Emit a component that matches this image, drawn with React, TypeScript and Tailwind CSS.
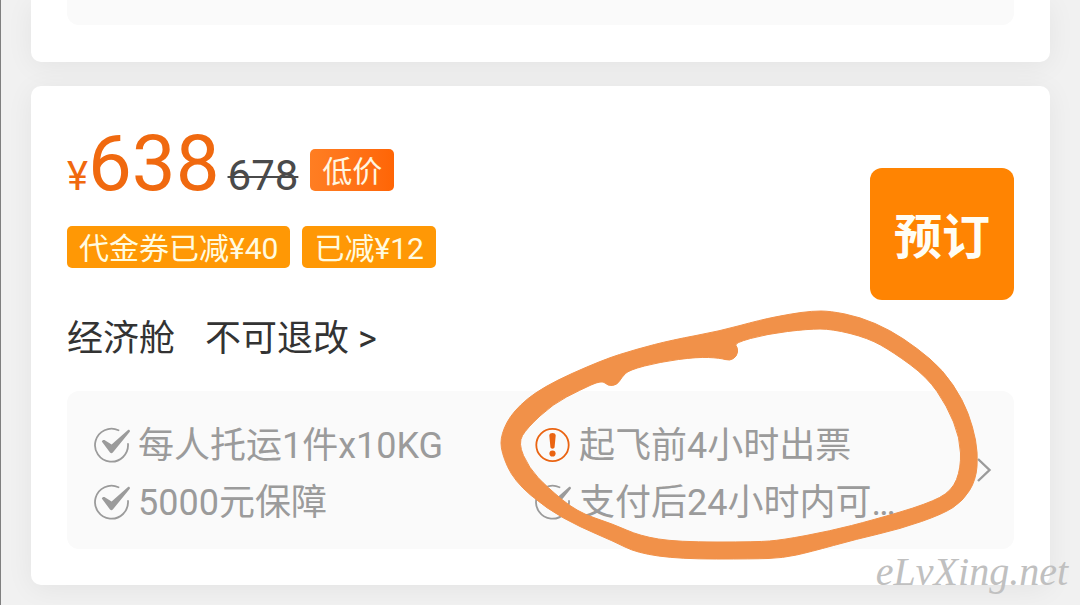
import type { ReactNode } from "react";

type Point = [number, number];

// Outer and inner edges of the marker ring, in ring coordinates
const outerEdge: Point[] = [
  [280, 20], [310, 14], [332, 11], [350, 11], [380, 17], [410, 30],
  [437, 48], [463, 70], [483, 100], [493, 127], [498, 153], [496, 180],
  [483, 201], [463, 214], [420, 229], [377, 239], [330, 252], [303, 258],
  [273, 259], [200, 259], [157, 253], [133, 241], [100, 227], [67, 209],
  [34, 181], [21, 152], [21, 134], [33, 111], [62, 87], [122, 60],
  [157, 49], [192, 40], [240, 31],
];

const innerEdge: Point[] = [
  [287, 34], [254, 43], [258, 48], [257, 56], [250, 61], [240, 58],
  [217, 57], [180, 62], [149, 70], [142, 77], [137, 85], [128, 86],
  [122, 80], [100, 90], [73, 104], [47, 128], [38, 143], [49, 168],
  [67, 187], [97, 212], [133, 224], [160, 236], [197, 242], [277, 242],
  [302, 240], [350, 231], [393, 220], [447, 204], [472, 191], [481, 168],
  [480, 138], [467, 106], [447, 77], [413, 52], [388, 38], [352, 29],
  [328, 29],
];

// Rounds a closed polygon by running curves through the edge midpoints
const smooth = (points: Point[]) => {
  const mid = (a: Point, b: Point) =>
    `${(a[0] + b[0]) / 2} ${(a[1] + b[1]) / 2}`;
  const last = points[points.length - 1];
  const curves = points.map(
    (p, i) => `Q${p[0]} ${p[1]} ${mid(p, points[(i + 1) % points.length])}`,
  );
  return `M${mid(last, points[0])} ${curves.join(" ")}Z`;
};

const CheckIcon = () => (
  <svg viewBox="0 0 36 36" className="size-9 shrink-0" aria-hidden="true">
    <path
      d="M24.5 3.2A16.5 16.5 0 1 0 34 17"
      fill="none"
      stroke="currentColor"
      strokeWidth="1.8"
      strokeLinecap="round"
    />
    <path
      d="M7.8 14.6C8.2 13 9.8 12.5 11.2 13.4L17.6 17.6L34 3C35.2 2.4 36.4 3.6 35.8 4.8L19 25.2C18 26.5 17 26.5 16 25.4Z"
      fill="currentColor"
    />
  </svg>
);

const AlertIcon = () => (
  <svg
    viewBox="0 0 36 36"
    className="size-9 shrink-0 text-[#ea6412]"
    aria-hidden="true"
  >
    <circle
      cx="17.5"
      cy="18"
      r="16.2"
      fill="none"
      stroke="currentColor"
      strokeWidth="1.8"
    />
    <path
      d="M14.3 8.5C14.3 5.2 20.7 5.2 20.7 8.5L19.6 20C19.4 22.2 15.6 22.2 15.4 20Z"
      fill="currentColor"
    />
    <circle cx="17.5" cy="26.5" r="3.1" fill="currentColor" />
  </svg>
);

const ChevronIcon = () => (
  <svg
    viewBox="0 0 16 26"
    className="h-[26px] w-4 shrink-0"
    fill="none"
    stroke="currentColor"
    strokeWidth="2.4"
    aria-hidden="true"
  >
    <path d="M2 2L13.5 13L2 24" />
  </svg>
);

const Tag = ({ children }: { children: ReactNode }) => (
  <span className="rounded-[5px] bg-[#ff9805] px-3 pt-1 text-[30px] leading-[38px] text-[#fffbe0]">
    {children}
  </span>
);

const Benefit = ({ icon, children }: { icon: ReactNode; children: ReactNode }) => (
  <li className="flex items-center gap-2 whitespace-nowrap">
    {icon}
    <span className="pt-1 leading-[53px]">{children}</span>
  </li>
);

const App = () => {
  return (
    <main className="relative overflow-hidden border-l border-[#808080] bg-[#f1f1f1] pr-[30px] pb-5 pl-[30px] font-[Roboto,'Noto_Sans_CJK_SC',sans-serif]">
      {/* Previous fare */}
      <section className="rounded-b-[10px] bg-white px-9 pb-[37px] shadow-[0_4px_28px_rgba(0,0,0,0.06)]">
        <div className="h-[25px] rounded-b-xl bg-[#fafafa]" />
      </section>

      {/* Fare card */}
      <section className="relative mt-6 rounded-[10px] bg-white px-9 pt-[38px] pb-9 shadow-[0_4px_28px_rgba(0,0,0,0.06)]">
        <div className="flex items-start justify-between">
          <div>
            <div className="flex h-[93px] items-baseline leading-[80px]">
              <span className="text-[40px] text-[#f0690f]">¥</span>
              <strong className="text-[78px] font-normal text-[#f0690f]">
                638
              </strong>
              <del className="ml-2 text-[42px] text-[#4a4a4a] decoration-2">
                678
              </del>
              <span className="mt-[25px] ml-3 self-start rounded-[5px] bg-linear-to-r from-[#ff7e22] to-[#ff6505] px-3 pt-1 text-[30px] leading-[38px] text-[#fff6e0]">
                低价
              </span>
            </div>
            <div className="mt-[9px] flex gap-3">
              <Tag>代金券已减¥40</Tag>
              <Tag>已减¥12</Tag>
            </div>
            <div className="mt-12 flex gap-[30px] text-4xl leading-[46px] text-[#333]">
              <span>经济舱</span>
              <button type="button">不可退改 &gt;</button>
            </div>
          </div>
          <button
            type="button"
            className="mt-11 h-[132px] w-36 rounded-xl bg-[#ff8402] pt-2 text-5xl font-bold text-[#fffdf5]"
          >
            预订
          </button>
        </div>

        <a
          href="#rules"
          className="mt-[29px] flex items-center rounded-xl bg-[#fafafa] pr-[22px] pl-[27px] text-[#9b9b9b]"
        >
          <ul className="grid flex-1 grid-cols-2 pt-[25px] pb-[19px] text-4xl">
            <Benefit icon={<CheckIcon />}>每人托运1件x10KG</Benefit>
            <Benefit icon={<AlertIcon />}>起飞前4小时出票</Benefit>
            <Benefit icon={<CheckIcon />}>5000元保障</Benefit>
            <Benefit icon={<CheckIcon />}>支付后24小时内可…</Benefit>
          </ul>
          <ChevronIcon />
        </a>
      </section>

      {/* Marker ring */}
      <svg
        viewBox="0 0 600 305"
        className="pointer-events-none absolute right-0 bottom-0 h-[305px] w-[600px]"
        aria-hidden="true"
      >
        <path
          d={`${smooth(outerEdge)} ${smooth(innerEdge)}`}
          fill="#f19149"
          fillRule="evenodd"
          stroke="#f19149"
        />
      </svg>

      <span className="absolute right-3 bottom-2 font-['Liberation_Serif',serif] text-[40px] leading-[50px] text-[#c0c0c0] italic">
        eLvXing.net
      </span>
    </main>
  );
};

export default App;
